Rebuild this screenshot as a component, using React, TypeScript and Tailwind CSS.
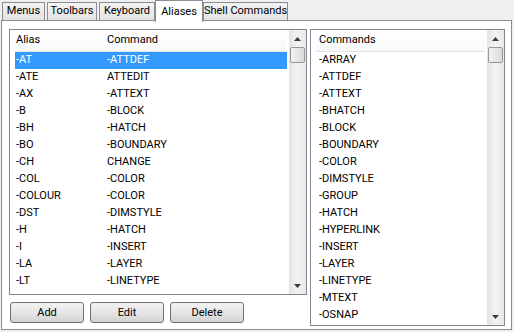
import React from "react";

const aliases: [string, string][] = [
    ["-AT", "-ATTDEF"],
    ["-ATE", "ATTEDIT"],
    ["-AX", "-ATTEXT"],
    ["-B", "-BLOCK"],
    ["-BH", "-HATCH"],
    ["-BO", "-BOUNDARY"],
    ["-CH", "CHANGE"],
    ["-COL", "-COLOR"],
    ["-COLOUR", "-COLOR"],
    ["-DST", "-DIMSTYLE"],
    ["-H", "-HATCH"],
    ["-I", "-INSERT"],
    ["-LA", "-LAYER"],
    ["-LT", "-LINETYPE"],
];

const commands = [
    "-ARRAY", "-ATTDEF", "-ATTEXT", "-BHATCH", "-BLOCK", "-BOUNDARY", "-COLOR", "-DIMSTYLE",
    "-GROUP", "-HATCH", "-HYPERLINK", "-INSERT", "-LAYER", "-LINETYPE", "-MTEXT", "-OSNAP",
];

// classic vertical scrollbar, arrows + thumb at the top
function ScrollBar() {
    return (
        <div className="w-[17px] h-full flex flex-col bg-gradient-to-r from-[#e3e3e3] via-[#f3f3f3] to-[#e8e8e8]">
            <div className="h-[17px] flex items-center justify-center">
                <svg width="7" height="4" viewBox="0 0 7 4"><path d="M3.5 0 L7 4 L0 4 Z" fill="#3c3c3c" /></svg>
            </div>
            <div className="mx-[1px] h-[16px] rounded-[2px] border border-[#979797] bg-gradient-to-r from-[#f4f4f4] to-[#d9d9d9]" />
            <div className="flex-1" />
            <div className="h-[17px] flex items-center justify-center">
                <svg width="7" height="4" viewBox="0 0 7 4"><path d="M0 0 L7 0 L3.5 4 Z" fill="#3c3c3c" /></svg>
            </div>
        </div>
    );
}

function Tab({ label, width, active }: { label: string, width: string, active?: boolean }) {
    if (active) {
        return (
            <div className={`${width} h-[22px] -mb-[2px] bg-white border border-b-0 border-[#898c95] flex items-start justify-center pt-[3px] relative z-10 whitespace-nowrap`}>
                {label}
            </div>
        );
    }
    return (
        <div className={`${width} h-[18px] bg-gradient-to-b from-[#f3f3f3] to-[#e3e3e3] border border-b-0 border-[#898c95] flex items-center justify-center whitespace-nowrap`}>
            {label}
        </div>
    );
}

function Button({ label }: { label: string }) {
    return (
        <button className="w-[74px] h-[21px] rounded-[3px] border border-[#707070] bg-gradient-to-b from-[#f2f2f2] via-[#e6e6e6] to-[#d2d2d2] text-black leading-none">
            {label}
        </button>
    );
}

export default function App() {
    return (
        <div className="w-[514px] h-[332px] bg-[#f0f0f0] overflow-hidden text-[11px] text-black font-['Roboto',sans-serif]">
            {/* tab strip */}
            <div className="h-[20px] flex items-end relative z-10">
                <div className="ml-[2px]"><Tab label="Menus" width="w-[43px]" /></div>
                <div className="ml-[2px]"><Tab label="Toolbars" width="w-[50px]" /></div>
                <div className="ml-[2px]"><Tab label="Keyboard" width="w-[56px]" /></div>
                <Tab label="Aliases" width="w-[48px]" active />
                <Tab label="Shell Commands" width="w-[85px]" />
            </div>

            {/* page */}
            <div className="ml-[1px] w-[511px] h-[310px] border border-[#898c95] bg-white pl-[7px] pt-[8px] flex gap-[3px]">
                <div className="flex flex-col">
                    <div className="w-[298px] h-[266px] border border-[#828790] flex bg-white">
                        <div className="flex-1 pl-[5px] pr-[2px] overflow-hidden">
                            <div className="h-[22px] flex items-center border-b border-[#e5e5e5] bg-gradient-to-b from-white to-[#f7f8f9]">
                                <span className="w-[92px] pl-[1px]">Alias</span>
                                <span>Command</span>
                            </div>
                            {aliases.map(([a, c], i) => (
                                <div key={a} className={`h-[17px] flex items-center ${i === 0 ? "bg-[#3399ff] text-white" : ""}`}>
                                    <span className="w-[92px] pl-[1px]">{a}</span>
                                    <span>{c}</span>
                                </div>
                            ))}
                        </div>
                        <ScrollBar />
                    </div>
                    <div className="mt-[7px] ml-[1px] flex gap-[6px]">
                        <Button label="Add" />
                        <Button label="Edit" />
                        <Button label="Delete" />
                    </div>
                </div>

                <div className="w-[195px] h-[297px] border border-[#828790] flex bg-white">
                    <div className="flex-1 pl-[5px] pr-[2px] overflow-hidden">
                        <div className="h-[22px] flex items-center border-b border-[#e5e5e5] bg-gradient-to-b from-white to-[#f7f8f9]">
                            <span className="pl-[3px]">Commands</span>
                        </div>
                        {commands.map((c) => (
                            <div key={c} className="h-[17px] flex items-center pl-[3px]">{c}</div>
                        ))}
                    </div>
                    <ScrollBar />
                </div>
            </div>
        </div>
    );
}
